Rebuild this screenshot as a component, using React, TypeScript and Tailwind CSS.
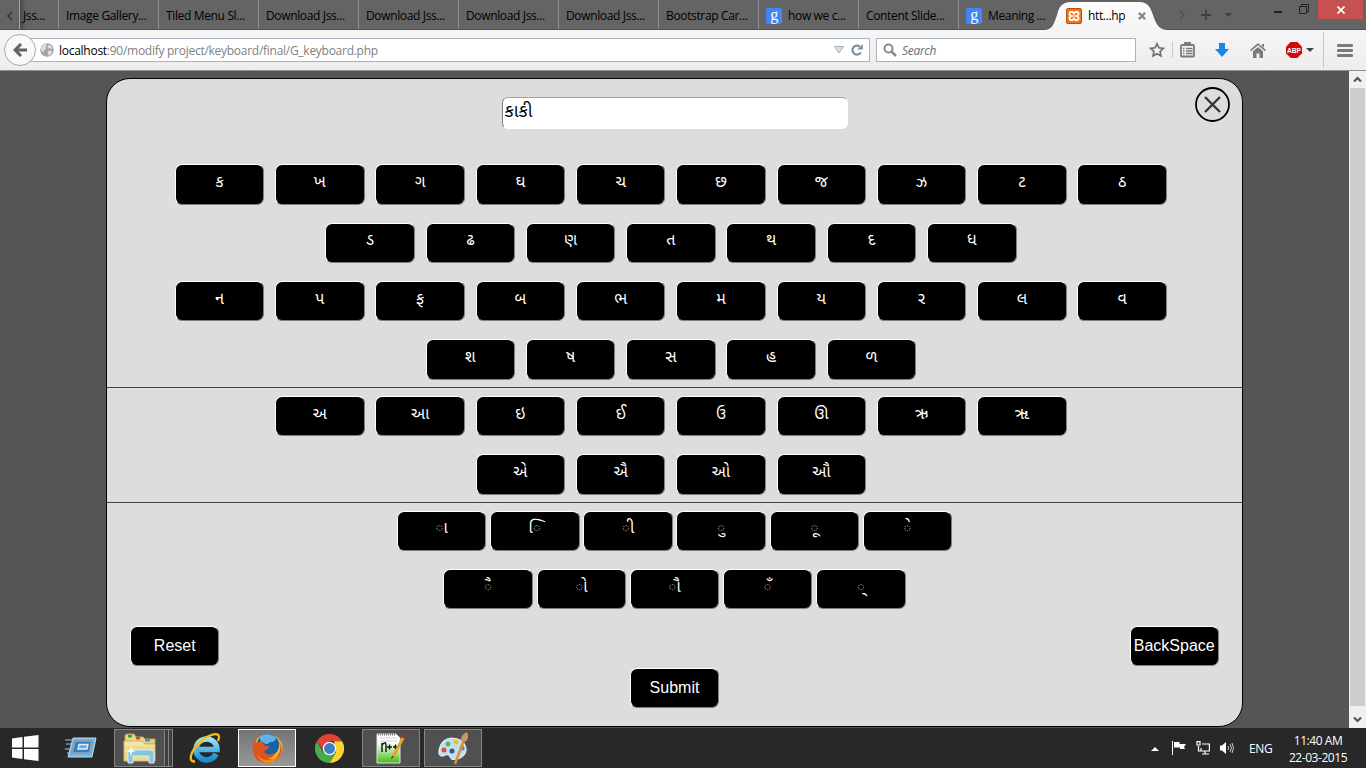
import type { ReactNode } from "react";

const consonants = ["ક ખ ગ ઘ ચ છ જ ઝ ટ ઠ", "ડ ઢ ણ ત થ દ ધ", "ન પ ફ બ ભ મ ય ર લ વ", "શ ષ સ હ ળ"];
const vowels = ["અ આ ઇ ઈ ઉ ઊ ઋ ૠ", "એ ઐ ઓ ઔ"];
const signs = ["\u0abe \u0abf \u0ac0 \u0ac1 \u0ac2 \u0ac7", "\u0ac8 \u0acb \u0acc \u0a81 \u0acd"];

const keyBox =
  "flex h-[40.5px] w-[89.47px] shrink-0 items-center justify-center rounded-[7px] border border-t-white border-l-white border-r-[#808080] border-b-[#808080] bg-black text-white";

function Key({ children }: { children: ReactNode }) {
  return (
    <button className={`${keyBox} pb-px text-[16px] leading-none font-['Noto_Sans_Gujarati','Noto_Sans',sans-serif]`}>
      {children}
    </button>
  );
}

function ActionKey({ children }: { children: ReactNode }) {
  return (
    <button className={`${keyBox} text-[16px] leading-none whitespace-nowrap font-['Liberation_Sans',Arial,sans-serif]`}>
      {children}
    </button>
  );
}

function Rows({ rows, tight = false }: { rows: string[]; tight?: boolean }) {
  return (
    <div className={tight ? "flex flex-col gap-[17.8px]" : "flex flex-col gap-[17.8px] pr-[7.26px]"}>
      {rows.map((row) => (
        <div key={row} className={tight ? "flex justify-center gap-[3.7px]" : "flex justify-center gap-[10.83px]"}>
          {row.split(" ").map((k) => (
            <Key key={k}>{k}</Key>
          ))}
        </div>
      ))}
    </div>
  );
}

function GoogleIcon() {
  return (
    <span className="mr-[6px] flex h-4 w-4 shrink-0 items-center justify-center rounded-[2px] bg-[#4285f4] pb-[3px] text-[16px] leading-none text-white font-['Liberation_Serif',serif]">
      g
    </span>
  );
}

function Tab({ label, google }: { label: string; google?: boolean }) {
  return (
    <div className="flex h-[29px] w-[100px] shrink-0 items-center border-l border-[#8d8f91] pl-[7px] pt-[3px] whitespace-nowrap">
      {google && <GoogleIcon />}
      {label}
    </div>
  );
}

function TabStrip() {
  return (
    <div className="relative flex h-[30px] items-start border-b border-[#4a525b] bg-[#646464] text-[12px] tracking-[-0.35px] text-black">
      <div className="flex h-[29px] w-[20px] shrink-0 items-center justify-center border-r border-[#a5a5a5] pt-[2px]">
        <svg width="8" height="10" viewBox="0 0 8 10" fill="none" stroke="#3c3c3c" strokeWidth="1.8"><path d="M6 1L2 5l4 4" /></svg>
      </div>
      <div className="flex h-[29px] w-[38px] shrink-0 items-center bg-linear-to-r from-[#474747] to-[#646464] to-15% pl-[3px] pt-[3px]">Jss...</div>
      <Tab label="Image Gallery..." />
      <Tab label="Tiled Menu Sl..." />
      <Tab label="Download Jss..." />
      <Tab label="Download Jss..." />
      <Tab label="Download Jss..." />
      <Tab label="Download Jss..." />
      <Tab label="Bootstrap Car..." />
      <Tab label="how we c..." google />
      <Tab label="Content Slide..." />
      <Tab label="Meaning ..." google />
      <div className="absolute top-[2px] left-[1044px] h-[29px] w-[126px]">
        <svg className="absolute inset-0" width="126" height="29" viewBox="0 0 126 29">
          <defs>
            <linearGradient id="tab" x1="0" y1="0" x2="0" y2="1"><stop offset="0" stopColor="#fdfdfd" /><stop offset="1" stopColor="#f4f4f4" /></linearGradient>
          </defs>
          <path d="M0 29V28C8 28 10 22 13 13C15 5 18 0 27 0H95C104 0 106 5 109 13C112 22 115 28 124 28V29Z" fill="url(#tab)" />
        </svg>
        <div className="relative flex h-[28px] items-center pl-[22px]">
          <svg width="16" height="16" viewBox="0 0 16 16">
            <rect x=".5" y=".5" width="15" height="15" rx="1.5" fill="#f27418" stroke="#b8510c" />
            <path d="M4.800 4q-1.300 0-1.300 1.200v1.300L5.300 8 3.500 9.500v1.300Q3.500 12 4.800 12h1.700L8 10.500 9.500 12h1.700q1.300 0 1.300-1.200V9.500L10.700 8l1.800-1.500V5.200Q12.500 4 11.200 4H9.500L8 5.500 6.500 4Z" fill="none" stroke="#fff" strokeWidth="1.800" />
            <path d="M6 8h4" stroke="#fff" strokeWidth="1.200" />
          </svg>
          <span className="ml-[6px] w-[50px]">htt...hp</span>
          <svg width="8" height="8" viewBox="0 0 9 9" stroke="#808994" strokeWidth="2.500"><path d="M1 1l7 7M8 1L1 8" /></svg>
        </div>
      </div>
      <div className="absolute top-[8px] left-[1178px] flex items-center gap-[16px]">
        <svg width="8" height="12" viewBox="0 0 8 12" fill="none" stroke="#505050" strokeWidth="1.600"><path d="M2 2l4 4-4 4" /></svg>
        <svg className="-ml-[1px]" width="10" height="14" viewBox="0 0 10 14" stroke="#3f3f3f" strokeWidth="1.800"><path d="M5 2v10M0 7h10" /></svg>
        <svg className="-ml-[2px]" width="7" height="4" viewBox="0 0 7 4"><path d="M0 0h7L3.500 4Z" fill="#3f3f3f" /></svg>
      </div>
      <div className="absolute top-0 right-[3px] flex h-[19px] items-start">
        <svg className="mt-[11px] mr-[17px]" width="8" height="2"><rect width="8" height="2" fill="#222" /></svg>
        <svg className="mt-[4px] mr-[9px]" width="10" height="10" viewBox="0 0 10 10" fill="none" stroke="#222"><path d="M.5 2.500h7v7h-7ZM2.500 2V.5h7v7H8" /></svg>
        <div className="flex h-[19px] w-[45px] items-center justify-center bg-[#c75050]">
          <svg width="8" height="8" viewBox="0 0 8 8" stroke="#fff" strokeWidth="1.700"><path d="M.5.5l7 7M7.500.5l-7 7" /></svg>
        </div>
      </div>
    </div>
  );
}

function NavBar() {
  return (
    <div className="flex h-[41px] items-center border-b border-[#919191] bg-linear-to-b from-[#f5f5f5] to-[#ededed] text-[12px]">
      <div className="relative z-10 ml-[4px] flex h-8 w-8 shrink-0 items-center justify-center rounded-full border border-[#a9a9a9] bg-[#f9f9f9]">
        <svg width="14" height="14" viewBox="0 0 14 14" fill="none" stroke="#5f646a" strokeWidth="3"><path d="M8 1L2 7l6 6M2.500 7H14" /></svg>
      </div>
      <div className="-ml-[8px] flex h-6 w-[842px] shrink-0 items-center border border-[#a9b4c2] bg-white pl-[11px]">
        <svg width="14" height="14" viewBox="0 0 14 14">
          <circle cx="7" cy="7" r="6.800" fill="#a4a4a4" />
          <path d="M1 5l2-3 3-1 1 1.500L5.500 4 6 6 3.500 7.500 4 9.500 2.500 9 1 7ZM8.500 2l2 .5 2 2.500L11 6 9.500 5 8 6 7.500 4ZM8 8l2.500-.5 2 1L11 11l-2 2-1-2.500Z" fill="#dedede" />
        </svg>
        <span className="ml-[5px] grow pt-[2px] tracking-[-0.27px] text-[#808080]"><span className="text-black">localhost</span>:90/modify project/keyboard/final/G_keyboard.php</span>
        <svg className="mr-[7px]" width="10" height="8" viewBox="0 0 10 8"><path d="M.5.5h9L5 7Z" fill="#d9dee4" stroke="#a7afb9" /></svg>
        <svg className="mr-[6px]" width="12" height="12" viewBox="0 0 12 12"><path d="M9.800 8.500A4.500 4.500 0 1 1 8.800 2.600" fill="none" stroke="#7f8f9f" strokeWidth="2.200" /><path d="M11.800 0v5.500H6.300Z" fill="#7f8f9f" /></svg>
      </div>
      <div className="ml-[6px] flex h-6 w-[260px] shrink-0 items-center border border-[#a9b4c2] bg-white pl-[6px]">
        <svg width="14" height="14" viewBox="0 0 14 14" fill="none" stroke="#8a8a8a"><circle cx="5.500" cy="5.500" r="4" strokeWidth="2" /><path d="M8.500 8.500l4.500 4.500" strokeWidth="2.500" /></svg>
        <span className="ml-[5px] pt-[2px] tracking-[-0.3px] text-[#6d6d6d] italic">Search</span>
      </div>
      <svg className="ml-[13px] shrink-0" width="16" height="16" viewBox="0 0 16 16" fill="none" stroke="#6d7278" strokeWidth="1.700"><path d="M8 1.800l1.900 4 4.400.6-3.200 3.100.8 4.400L8 11.800l-3.900 2.100.8-4.400L1.700 6.400l4.400-.6Z" /></svg>
      <div className="ml-[7px] h-4 w-px bg-[#c5c9ce]" />
      <svg className="ml-[7px] shrink-0" width="15" height="16" viewBox="0 0 15 16" fill="none" stroke="#777b80"><rect x="1" y="3" width="13" height="11.500" rx="1" strokeWidth="1.800" /><path d="M5 2.500V1h5v1.500" strokeWidth="1.800" /><path d="M3 6.500h1.500M6 6.500h6.500M3 9h1.500M6 9h6.500M3 11.500h1.500M6 11.500h6.500" strokeWidth="1.300" /></svg>
      <svg className="ml-[20px] shrink-0" width="14" height="14" viewBox="0 0 14 14"><path d="M4 0h6v6h4l-7 8-7-8h4Z" fill="#1a84e8" /></svg>
      <svg className="ml-[21px] shrink-0" width="16" height="15" viewBox="0 0 16 15" fill="#777b80"><path d="M8 0l8 7-1 1.200L8 2.200 1 8.200 0 7ZM12 1h2v3.500l-2-1.700Z" /><path d="M8 4l5 4.200V15H9.500v-4.500h-3V15H3V8.200Z" /></svg>
      <div className="ml-[20px] flex h-4 w-4 shrink-0 items-center">
        <svg width="16" height="16" viewBox="0 0 16 16"><path d="M4.700 0h6.600L16 4.700v6.600L11.300 16H4.700L0 11.300V4.700Z" fill="#ce0a0a" /><text x="8" y="10.800" textAnchor="middle" textLength="14" lengthAdjust="spacingAndGlyphs" fontSize="7.500" fontWeight="bold" fontFamily="Liberation Sans" fill="#fff">ABP</text></svg>
      </div>
      <svg className="ml-[4px] shrink-0" width="8" height="4" viewBox="0 0 8 4"><path d="M0 0h8L4 4Z" fill="#444" /></svg>
      <div className="ml-[9px] h-9 w-px bg-[#c8c8c8]" />
      <svg className="ml-[13px] shrink-0" width="16" height="13" viewBox="0 0 16 13" fill="#777b80"><rect width="16" height="3" rx="1" /><rect y="5" width="16" height="3" rx="1" /><rect y="10" width="16" height="3" rx="1" /></svg>
    </div>
  );
}

function Panel() {
  return (
    <div className="relative ml-[106px] mt-[7px] h-[649px] w-[1137px] shrink-0 rounded-[24px] border border-black bg-[#ddd]">
      <div className="flex justify-center pt-[18px]">
        <div className="flex h-[32px] w-[346px] items-center rounded-[6px] border border-t-[#a0a0a0] border-l-[#808080] border-r-white border-b-white bg-white pl-[2px] text-[18px] leading-none text-black font-['Noto_Sans_Gujarati','Noto_Sans',sans-serif]">કાકી</div>
      </div>
      <svg className="absolute top-[8px] left-[1088px]" width="35" height="35" viewBox="0 0 35 35" fill="none" stroke="#333"><circle cx="17.500" cy="17.500" r="16.500" strokeWidth="1.800" stroke="#000" /><path d="M10 10l15 15M25 10L10 25" strokeWidth="2.300" /></svg>
      <div className="mt-[35.300px] h-[223.700px] border-b border-[#444]"><Rows rows={consonants} /></div>
      <div className="h-[115px] border-b border-[#444] pt-[7.800px]"><Rows rows={vowels} /></div>
      <div className="pt-[7.600px]"><Rows rows={signs} tight /></div>
      <div className="mt-[16.300px] flex justify-between pr-[23px] pl-[23px]">
        <ActionKey>Reset</ActionKey>
        <ActionKey>BackSpace</ActionKey>
      </div>
      <div className="mt-[1.500px] flex justify-center"><ActionKey>Submit</ActionKey></div>
    </div>
  );
}

function ScrollBar() {
  return (
    <div className="flex w-[17px] flex-col items-center bg-[#f0f0f0]">
      <svg className="my-[5px]" width="9" height="7" viewBox="0 0 9 7" fill="none" stroke="#555" strokeWidth="2.200"><path d="M1 5.500L4.500 2 8 5.500" /></svg>
      <div className="h-[618px] w-[15px] bg-[#cdcdcd]" />
      <svg className="mt-[10px]" width="9" height="7" viewBox="0 0 9 7" fill="none" stroke="#555" strokeWidth="2.200"><path d="M1 1.500L4.500 5 8 1.500" /></svg>
    </div>
  );
}

function TaskButton({ children, active = false }: { children: ReactNode; active?: boolean }) {
  return (
    <div className={active ? "flex h-[38px] w-[58px] items-center justify-center border border-white bg-linear-to-b from-[#747474] to-[#999]" : "flex h-[38px] w-[58px] items-center justify-center border border-[#858585] bg-[#505050]"}>
      {children}
    </div>
  );
}

function TaskBar() {
  return (
    <div className="flex h-10 shrink-0 items-center bg-[#282828] text-[12px] text-white">
      <svg className="ml-[12px]" width="27" height="26" viewBox="0 0 27 26" fill="#fff"><path d="M0 3.500L10.500 2v10.500H0ZM12 1.800L26.500 0v12.500H12ZM0 14h10.500v10L0 22.500ZM12 14h14.500v12L12 24.200Z" /></svg>
      <svg className="ml-[26px]" width="32" height="22" viewBox="0 0 32 22">
        <path d="M0 3h7M1 7h6M0 12h5M2 16h3" stroke="#7593ac" strokeWidth="1.500" />
        <path d="M8 1h23l-4 19H3Z" fill="#70b5ea" stroke="#b8ddf5" /><path d="M10 4h17l-2.500 12H7Z" fill="#367ebc" stroke="#8b9caa" strokeWidth="2" /><path d="M14 7.500h9l-1 4.500h-9Z" fill="#69a9e2" stroke="#e2f2fc" strokeWidth="1.300" />
      </svg>
      <div className="ml-[17px] flex">
        <div className="flex h-[38px] w-[51px] items-center justify-center border border-[#858585] bg-[#505050]">
          <svg width="34" height="32" viewBox="0 0 34 32">
            <path d="M2 4q0-2 2-2h7l2 3h7l2 2h10v5H2Z" fill="#e9d48c" stroke="#b99c4b" /><rect x="5" y="3" width="4" height="2.500" fill="#23a83c" /><rect x="13" y="5" width="4" height="2.500" fill="#d74930" /><rect x="22" y="7" width="5" height="2.500" fill="#3d90d4" />
            <path d="M1 9h18l3 3h10v17H1Z" fill="#f3e5a5" stroke="#cdb65e" /><path d="M2 14h30v14H2Z" fill="#ead382" opacity=".6" />
            <path d="M5 31V21q0-3 3-3h19q4 0 4 3v10h-5v-7H10v7Z" fill="#87c4de" stroke="#cfedf8" /><path d="M8 14l1 4 4 1-4 1-1 5-1-5-4-1 4-1Z" fill="#fff" />
          </svg>
        </div>
        <div className="h-[38px] w-[4px] border-y border-r border-[#858585] bg-[#3e3e3e]" />
        <div className="h-[38px] w-[4px] border-y border-r border-[#858585] bg-[#3e3e3e]" />
      </div>
      <svg className="ml-[16px]" width="32" height="32" viewBox="0 0 32 32">
        <defs><linearGradient id="ie" x1="0" y1="0" x2="0" y2="1"><stop stopColor="#9be4fb" /><stop offset="1" stopColor="#158dd2" /></linearGradient></defs>
        <path d="M27 22A10.500 10.500 0 1 1 28 17.500H10" fill="none" stroke="url(#ie)" strokeWidth="5.500" />
        <path d="M6 29.500C-4 30 5 13 16 6 25 1 33 0 29 9" fill="none" stroke="#f3be18" strokeWidth="2.300" />
      </svg>
      <div className="ml-[17px]">
        <TaskButton active>
          <svg width="31" height="31" viewBox="0 0 32 32">
            <circle cx="16.500" cy="16" r="15" fill="#f7b52c" /><circle cx="16.500" cy="12.500" r="11.500" fill="#1762a5" /><path d="M8 4q8-6 17 1-1 5-6 4-3 4-7 1-4-1-4-6Z" fill="#5eb4e6" />
            <path d="M3 6q0 3 2 4 4-2 6-1 0 3 2 4l5 1q-1 3-5 4-1 3 3 4 4 1 6-1 2 1 0 3-3 3-7 2 8 3 12-3 4-6 1-14 5 8 1 15-4 7-12 7Q5 31 2 23-1 14 3 6Z" fill="#de541d" /><path d="M5 22q4 6 11 6 9 0 12-9-1 12-12 12Q8 30 5 22Z" fill="#f08a25" />
          </svg>
        </TaskButton>
      </div>
      <svg className="ml-[19px]" width="29" height="29" viewBox="0 0 32 32">
        <path d="M2.100 8A16 16 0 0 1 29.900 8H16L10 20Z" fill="#df4332" /><path d="M2.100 8A16 16 0 0 0 16 32L22.500 20H9Z" fill="#45ab4c" /><path d="M29.900 8A16 16 0 0 1 16 32L23 20 21 8Z" fill="#fbd42f" /><circle cx="16" cy="16" r="7.500" fill="#f4f4f4" /><circle cx="16" cy="16" r="6" fill="#397fc6" />
      </svg>
      <div className="ml-[18px]">
        <TaskButton>
          <svg width="32" height="34" viewBox="0 0 32 34">
            <defs><linearGradient id="np" x1="0" y1="0" x2="0" y2="1"><stop offset=".3" stopColor="#fff" /><stop offset="1" stopColor="#45bd16" /></linearGradient></defs>
            <path d="M2 3h19l4 4v25H2Z" fill="url(#np)" stroke="#e2e2e2" /><path d="M3 3.500h18" stroke="#777" strokeDasharray="1 1" strokeWidth="2" /><path d="M5 7h17M5 10h17" stroke="#c9d6d9" />
            <path d="M7 21v-9M7 14q4-5 4 1v6M12 16h5M14.500 13.500v5M18 16h5M20.500 13.500v5" fill="none" stroke="#111" strokeWidth="1.400" /><path d="M29 5L18 26" stroke="#dfa529" strokeWidth="3" /><path d="M30 3l-2 4" stroke="#a02e38" strokeWidth="3.500" /><path d="M17 25l-1 3 3-2" fill="#333" />
          </svg>
        </TaskButton>
      </div>
      <div className="ml-[4px]">
        <TaskButton>
          <svg width="34" height="34" viewBox="0 0 34 34">
            <path d="M15 7q13 0 15 10 1 8-8 11-7 2-8-2t-7-1Q2 26 3 19 5 8 15 7Z" fill="#bfe0ef" stroke="#e8f7fc" /><circle cx="16" cy="20" r="2.500" fill="#315b79" /><circle cx="8" cy="19" r="2.500" fill="#de4d3e" /><circle cx="12" cy="13" r="2.500" fill="#56b95d" /><circle cx="20" cy="11" r="2.500" fill="#f3ba32" /><circle cx="26" cy="17" r="2.500" fill="#4288cd" />
            <path d="M28 9L19 33" stroke="#e58b31" strokeWidth="2.500" /><path d="M25 10q-1-6 6-9 3 6-2 10Z" fill="#c69864" />
          </svg>
        </TaskButton>
      </div>
      <div className="grow" />
      <svg className="mt-[2px] mr-[13px]" width="8" height="4" viewBox="0 0 8 4"><path d="M4 0l4 4H0Z" fill="#fff" /></svg>
      <svg className="mr-[10px]" width="14" height="14" viewBox="0 0 14 14"><path d="M.5 0v14" stroke="#fff" /><path d="M2 1h5.500v2H14l-2 3 1 2H8V6.500H2Z" fill="#fff" /></svg>
      <svg className="mr-[10px]" width="14" height="14" viewBox="0 0 14 14" fill="none" stroke="#fff" strokeWidth="1.200"><path d="M6 3h7.400v7H5V7M6 13h7M9 10v3M2.500 5v5H5M1 .6h3V4H1Z" /></svg>
      <svg className="mr-[15px]" width="14" height="14" viewBox="0 0 14 14"><path d="M0 4.500h2L6 1v12L2 9.500H0Z" fill="#fff" /><path d="M8 5q1.500 2 0 4M10 3q3 4 0 8M12 2q3 5 0 10" fill="none" stroke="#ddd" strokeWidth=".9" /></svg>
      <span className="mr-[16px] w-[23px] pt-[2px] tracking-[-0.4px]">ENG</span>
      <div className="mr-[18px] w-[60px] pt-[2px] text-center text-[12px] leading-[17px] tracking-[-0.45px] whitespace-nowrap"><div>11:40 AM</div><div>22-03-2015</div></div>
    </div>
  );
}

export default function App() {
  return (
    <div className="flex h-[768px] w-[1366px] flex-col overflow-hidden bg-[#555] font-['Open_Sans','Noto_Sans',sans-serif]">
      <TabStrip />
      <NavBar />
      <div className="flex h-[657px] shrink-0 justify-between">
        <Panel />
        <ScrollBar />
      </div>
      <TaskBar />
    </div>
  );
}
